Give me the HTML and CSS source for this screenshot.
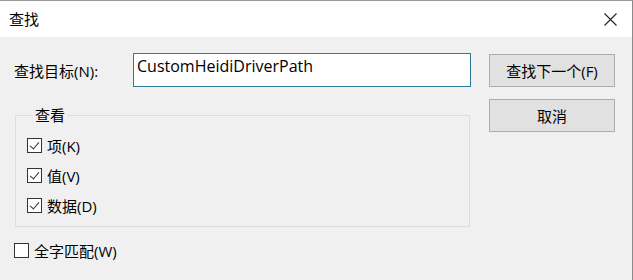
FILE: index.html
```html
<!DOCTYPE html>
<html lang="zh-CN">
<head>
<meta charset="UTF-8" />
<meta name="viewport" content="width=device-width, initial-scale=1" />
<title>查找</title>
<link rel="stylesheet" href="styles.css">
</head>
<body>

<div class="window">
  <div class="titlebar">
    <span class="title">查找</span>
    <svg class="close" width="13" height="13" viewBox="0 0 13 13">
      <path d="M0.5 0.5 L12.5 12.5 M12.5 0.5 L0.5 12.5" stroke="#222" stroke-width="1.1" fill="none" />
    </svg>
  </div>

  <div class="content">
    <div class="main">
      <div class="find-row">
        <label class="find-label" for="target">查找目标(N):</label>
        <input type="text" id="target" class="find-input" value="CustomHeidiDriverPath" />
      </div>

      <fieldset class="group">
        <legend>查看</legend>
        <div class="check"><span class="box checked"></span>项(K)</div>
        <div class="check"><span class="box checked"></span>值(V)</div>
        <div class="check"><span class="box checked"></span>数据(D)</div>
      </fieldset>

      <div class="check whole"><span class="box"></span>全字匹配(W)</div>
    </div>

    <div class="actions">
      <button class="btn">查找下一个(F)</button>
      <button class="btn">取消</button>
    </div>
  </div>
</div>

</body>
</html>
```

FILE: styles.css
```css
body {
  margin: 0;
  font-family: "Open Sans", "Noto Sans CJK SC", sans-serif;
  font-size: 15px;
  color: #000;
  background: #f0f0f0;
}
.window {
  width: 632px;
  height: 279px;
  border-top: 1px solid #9a9a9a;
  border-right: 1px solid #8a8a8a;
  background: #f0f0f0;
  overflow: hidden;
}
.titlebar {
  height: 36px;
  background: #fff;
  display: flex;
  align-items: center;
  padding-left: 9px;
}
.title {
  line-height: 1;
}
.close {
  margin-left: auto;
  margin-right: 15px;
}
.content {
  display: flex;
  padding-top: 16px;
}
.main {
  width: 471px;
}
.find-row {
  display: flex;
  align-items: center;
  height: 34px;
}
.find-label {
  width: 119px;
  padding-left: 14px;
}
.find-input {
  box-sizing: border-box;
  width: 338px;
  height: 34px;
  margin: 0;
  border: 1px solid #2c7c98;
  padding: 0 0 8px 3px;
  font: inherit;
  font-size: 16px;
  background: #fff;
  outline: none;
}
.group {
  margin: 20px 0 0 15px;
  width: 455px;
  box-sizing: border-box;
  height: 120px;
  border: 1px solid #dcdcdc;
  padding: 7px 0 0 11px;
}
.group legend {
  margin-left: 6px;
  padding: 0 2px;
  line-height: 16px;
}
.check {
  display: flex;
  align-items: center;
  height: 30px;
  gap: 5px;
}
.box {
  box-sizing: border-box;
  width: 15px;
  height: 15px;
  border: 1px solid #333;
  background: #fff;
  position: relative;
}
.box.checked::after {
  content: "";
  position: absolute;
  left: 4px;
  top: 1px;
  width: 4px;
  height: 8px;
  border-right: 1px solid #333;
  border-bottom: 1px solid #333;
  transform: rotate(40deg);
}
.whole {
  margin: 8px 0 0 14px;
}
.actions {
  display: flex;
  flex-direction: column;
  gap: 12px;
  margin-left: 18px;
  padding-top: 1px;
}
.btn {
  width: 126px;
  height: 33px;
  background: #e1e1e1;
  border: 1px solid #adadad;
  font: inherit;
  padding: 0;
}
```
